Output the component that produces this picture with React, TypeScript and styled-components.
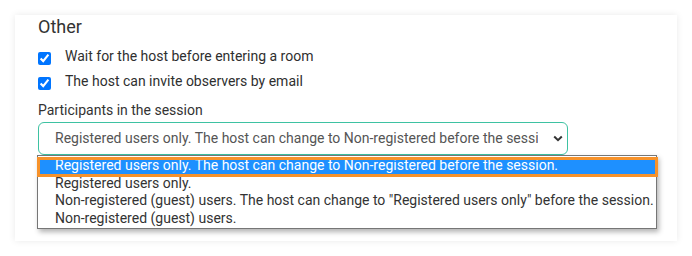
import React from 'react';
import styled, { createGlobalStyle } from 'styled-components';

const GlobalStyle = createGlobalStyle`
  html, body {
    margin: 0;
    background: #fff;
    font-family: Roboto, 'Noto Sans', Arial, sans-serif;
  }
`;

const Card = styled.section`
  background: #fff;
  box-shadow: 0 0 7px rgba(0, 0, 0, 0.09);
  box-sizing: border-box;
  height: 226px;
  margin: 15px;
  padding: 1px 23px 0;
  width: 662px;
`;

const Title = styled.h3`
  color: #333;
  font-size: 18px;
  font-weight: 400;
  line-height: 22px;
  margin: 0;
`;

const OptionList = styled.div`
  display: flex;
  flex-direction: column;
  margin-top: 6px;
`;

const CheckRow = styled.label`
  align-items: flex-start;
  color: #2f2f2f;
  display: flex;
  font-size: 14px;
  gap: 14px;
  height: 25px;
  line-height: 25px;
`;

const Checkbox = styled.input`
  height: 13px;
  margin: 8px 0 0;
  width: 13px;
`;

const FieldLabel = styled.div`
  color: #333;
  font-size: 14px;
  line-height: 20px;
  margin-top: 6px;
`;

const SelectWrap = styled.div`
  margin-top: 2px;
  position: relative;
  width: 530px;
`;

const SelectBox = styled.div`
  align-items: center;
  border: 1px solid #3ec2a2;
  border-radius: 6px;
  box-sizing: border-box;
  color: #555;
  display: flex;
  font-size: 14px;
  height: 33px;
  line-height: 31px;
  padding: 0 4px 0 16px;
`;

const SelectValue = styled.span`
  flex: 0 0 auto;
  overflow: hidden;
  white-space: nowrap;
  width: 483px;
`;

const Chevron = styled.svg`
  margin-left: auto;
`;

const Listbox = styled.ul`
  background: #fff;
  border: 1px solid #767676;
  box-shadow: 2px 3px 5px rgba(0, 0, 0, 0.3);
  box-sizing: border-box;
  left: -1px;
  list-style: none;
  margin: 0;
  padding: 1px 0 1px;
  position: absolute;
  top: 33px;
  width: 620px;
`;

const ListOption = styled.li<{ $active?: boolean }>`
  background: ${(p) => (p.$active ? '#1e90ff' : 'transparent')};
  color: ${(p) => (p.$active ? '#fff' : '#333')};
  font-size: 14px;
  line-height: 17.6px;
  padding-left: 17px;
  position: relative;
  white-space: nowrap;

  &::after {
    border: 3px solid #f7922a;
    bottom: -2.4px;
    content: '';
    display: ${(p) => (p.$active ? 'block' : 'none')};
    left: -1px;
    position: absolute;
    right: -2px;
    top: 0;
  }
`;

const options = [
  'Registered users only. The host can change to Non-registered before the session.',
  'Registered users only.',
  'Non-registered (guest) users. The host can change to "Registered users only" before the session.',
  'Non-registered (guest) users.',
];

export default function App() {
  return (
    <>
      <GlobalStyle />
      <Card>
        <Title>Other</Title>
        <OptionList>
          <CheckRow>
            <Checkbox type="checkbox" defaultChecked />
            Wait for the host before entering a room
          </CheckRow>
          <CheckRow>
            <Checkbox type="checkbox" defaultChecked />
            The host can invite observers by email
          </CheckRow>
        </OptionList>
        <FieldLabel>Participants in the session</FieldLabel>
        <SelectWrap>
          <SelectBox>
            <SelectValue>{options[0]}</SelectValue>
            <Chevron width="10" height="7" viewBox="0 0 10 7">
              <path d="M1.2 1.5 L5 5.2 L8.8 1.5" fill="none" stroke="#333" strokeWidth="2" />
            </Chevron>
          </SelectBox>
          <Listbox>
            {options.map((o, i) => (
              <ListOption key={o} $active={i === 0}>
                {o}
              </ListOption>
            ))}
          </Listbox>
        </SelectWrap>
      </Card>
    </>
  );
}
